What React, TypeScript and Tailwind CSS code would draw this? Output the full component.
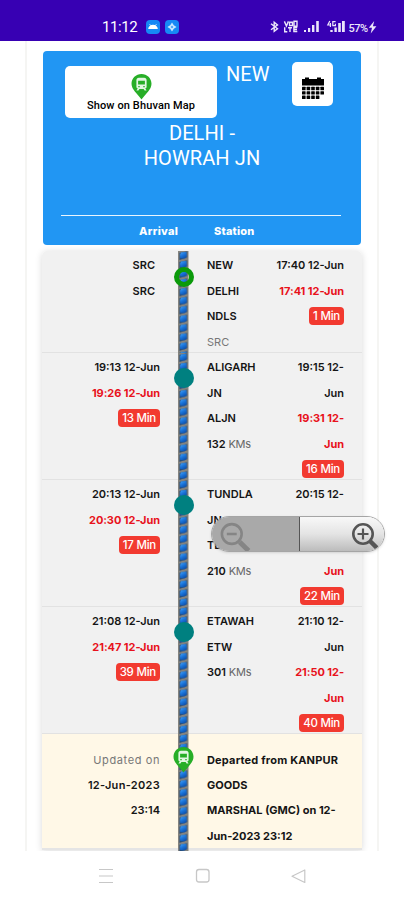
import React from "react";

interface Line {
  text: string;
  unit?: string;
  kind?: "late" | "badge" | "muted";
}

interface Stop {
  height: string;
  arrival: Line[];
  station: Line[];
  departure: Line[];
  marker: "source" | "stop";
}

const stops: Stop[] = [
  {
    height: "h-[102px]",
    marker: "source",
    arrival: [{ text: "SRC" }, { text: "SRC" }],
    station: [
      { text: "NEW" },
      { text: "DELHI" },
      { text: "NDLS" },
      { text: "SRC", kind: "muted" },
    ],
    departure: [
      { text: "17:40 12-Jun" },
      { text: "17:41 12-Jun", kind: "late" },
      { text: "1 Min", kind: "badge" },
    ],
  },
  {
    height: "h-[127px]",
    marker: "stop",
    arrival: [
      { text: "19:13 12-Jun" },
      { text: "19:26 12-Jun", kind: "late" },
      { text: "13 Min", kind: "badge" },
    ],
    station: [
      { text: "ALIGARH" },
      { text: "JN" },
      { text: "ALJN" },
      { text: "132", unit: "KMs" },
    ],
    departure: [
      { text: "19:15 12-" },
      { text: "Jun" },
      { text: "19:31 12-", kind: "late" },
      { text: "Jun", kind: "late" },
      { text: "16 Min", kind: "badge" },
    ],
  },
  {
    height: "h-[127px]",
    marker: "stop",
    arrival: [
      { text: "20:13 12-Jun" },
      { text: "20:30 12-Jun", kind: "late" },
      { text: "17 Min", kind: "badge" },
    ],
    station: [
      { text: "TUNDLA" },
      { text: "JN" },
      { text: "TDL" },
      { text: "210", unit: "KMs" },
    ],
    departure: [
      { text: "20:15 12-" },
      { text: "Jun" },
      { text: "20:37 12-", kind: "late" },
      { text: "Jun", kind: "late" },
      { text: "22 Min", kind: "badge" },
    ],
  },
  {
    height: "h-[127px]",
    marker: "stop",
    arrival: [
      { text: "21:08 12-Jun" },
      { text: "21:47 12-Jun", kind: "late" },
      { text: "39 Min", kind: "badge" },
    ],
    station: [{ text: "ETAWAH" }, { text: "ETW" }, { text: "301", unit: "KMs" }],
    departure: [
      { text: "21:10 12-" },
      { text: "Jun" },
      { text: "21:50 12-", kind: "late" },
      { text: "Jun", kind: "late" },
      { text: "40 Min", kind: "badge" },
    ],
  },
];

const TextLine = ({ line }: { line: Line }) => {
  if (line.kind === "badge") {
    return (
      <div className="flex h-[25.4px] justify-end pt-[3px]">
        <span className="h-[18px] rounded-[4px] bg-[#f23a30] px-1 text-[11.5px] leading-[18px] font-medium tracking-[-0.25px] text-white">
          {line.text}
        </span>
      </div>
    );
  }
  const tone =
    line.kind === "late"
      ? "font-bold tracking-[-0.05px] text-[#e8121c]"
      : line.kind === "muted"
        ? "font-normal text-[#777]"
        : "font-semibold text-[#151515]";
  return (
    <div className={`h-[25.4px] whitespace-nowrap ${tone}`}>
      {line.text}
      {line.unit && (
        <span className="font-normal tracking-[-0.2px] text-[#666]">
          {" "}
          {line.unit}
        </span>
      )}
    </div>
  );
};

const Lines = ({ items }: { items: Line[] }) => (
  <>
    {items.map((line, i) => (
      <TextLine key={i} line={line} />
    ))}
  </>
);

const TrainPin = ({ className }: { className: string }) => (
  <svg viewBox="0 0 20 26" className={className}>
    <path
      d="M10 0C4.4 0 0 4.3 0 9.8 0 15.6 6 20 10 25.5 14 20 20 15.6 20 9.8 20 4.3 15.6 0 10 0Z"
      fill="#27ae27"
    />
    <path
      fillRule="evenodd"
      d="M7.4 3.8h5.2c1.6 0 2.5 1 2.5 2.4v7.2l-1.3 1.2 1.3 1.8h-2l-1-1.4H7.9l-1 1.4h-2l1.3-1.8-1.3-1.2V6.2c0-1.4.9-2.4 2.5-2.4ZM6.6 6.7v3.8h6.8V6.7Zm.2 5.2v1.3h1.4v-1.3Zm5 0v1.3h1.4v-1.3Z"
      fill="#e2f6e2"
    />
  </svg>
);

const Track = ({ id }: { id: string }) => (
  <svg className="ml-[18px] block h-full w-[10.5px]">
    <defs>
      <linearGradient id={`${id}-blue`} x1="0.2" y1="0" x2="0.8" y2="1">
        <stop offset="0" stopColor="#3f9df5" />
        <stop offset="0.45" stopColor="#1a74da" />
        <stop offset="1" stopColor="#0a4aa6" />
      </linearGradient>
      <pattern
        id={id}
        width="10.5"
        height="9.07"
        patternUnits="userSpaceOnUse"
      >
        <rect width="10.5" height="9.07" fill="#85847f" />
        <path d="M1.4 1.8 9.1 0.2v6.4L1.4 9Z" fill="#294c74" />
        <path
          d="M3 1.4 8.2 0.9 8.9 5.6 6.6 7.6 2.2 7.2 2 3.4Z"
          fill={`url(#${id}-blue)`}
        />
      </pattern>
    </defs>
    <rect width="10.5" height="100%" fill={`url(#${id})`} />
  </svg>
);

const StatusBar = () => (
  <div className="flex h-[41px] bg-[#3700b3] pt-[14px] font-['Roboto'] text-white">
    <span className="ml-[102px] w-[44px] text-[15px] leading-[26px] tracking-[-0.4px]">
      11:12
    </span>
    <span className="mt-[6px] flex h-[14px] w-[14px] items-center justify-center rounded bg-[#1688f5]">
      <svg viewBox="0 0 14 14" className="h-3.5 w-3.5">
        <path d="M2.2 9a4.8 4.3 0 0 1 9.6 0Z" fill="white" />
        <path d="m3.5 4 1.3 1.8M10.5 4 9.2 5.8" stroke="white" strokeWidth="0.7" />
      </svg>
    </span>
    <span className="mt-[6px] ml-[5px] h-[14px] w-[14px] rounded bg-[#1688f5]">
      <svg viewBox="0 0 14 14" className="h-3.5 w-3.5">
        <path
          d="m7 2.4 1.8 2.8L11.6 7 8.8 8.8 7 11.6 5.2 8.8 2.4 7l2.8-1.8Z"
          fill="#c8e6ff"
        />
        <path d="M7 5.9v2.2M5.9 7h2.2" stroke="#1688f5" strokeWidth="0.8" />
      </svg>
    </span>
    <svg viewBox="0 0 108 16" className="mt-[5px] ml-[90px] h-4 w-[108px]">
      <path
        d="M2 4.8 8.5 9.8 5.2 12.4V3.2l3.3 2.7L2 10.8"
        fill="none"
        stroke="#ece6fa"
        strokeWidth="1.4"
      />
      <g fill="#ece6fa">
        <path d="M35 11h2v2h-2zM39 9h2.2v4H39zM43 6h2.4v7H43zM47.2 2h2.6v11h-2.6z" />
        <path d="M61.3 11h2.4v2h-2.4zM65.4 8.5h2.4V13h-2.4zM69.2 4h2.6v9h-2.6zM73 2h2.8v11H73z" />
        <path d="m105.2 2-5.4 6.7h3.2l-1.3 5.8 5.7-7.2h-3.5Z" />
        <path
          d="m15.4 2.4 2 4.6 2-4.6M20.6 3.2h2.8v3.4h-2.8ZM25 2.3h3v4.8h-3ZM15.7 8.3v4.4h2.6M19 8.7h4M21 8.7v4.3M28.3 8.5h-3.4v4h3.4M25 10.5h3"
          fill="none"
          stroke="#ece6fa"
          strokeWidth="1.4"
        />
        <path
          d="M60.8 2 58.8 6h3.4M61.4 4v4M66.6 2.6h-2.8v4h2.6V4.8"
          fill="none"
          stroke="#ece6fa"
          strokeWidth="1.2"
        />
        <text x="79.5" y="12.5" fontSize="11" fontWeight="500" textLength="19.5">
          57%
        </text>
      </g>
    </svg>
  </div>
);

const RouteHeader = () => (
  <div className="mx-px flex h-[194px] flex-col rounded-[4px] bg-[#2196f3] text-white">
    <div className="flex h-[68px] font-['Roboto']">
      <button
        type="button"
        className="mt-[15px] ml-[22px] flex h-[52px] w-[152px] flex-col items-center rounded-[5px] bg-white pt-2 text-black"
      >
        <TrainPin className="h-[26px] w-[21px]" />
        <span className="-mt-[2px] text-[11px] leading-[15px] font-medium tracking-[0.12px]">
          Show on Bhuvan Map
        </span>
      </button>
      <span className="mt-[8px] ml-[9px] w-[66px] text-[20px] leading-[30px]">
        NEW
      </span>
      <button
        type="button"
        className="mt-[11px] flex h-[44px] w-[41px] items-center justify-center rounded-[5px] bg-white pt-2"
      >
        <svg viewBox="0 0 24 24" className="h-6 w-6" fill="black">
          <path d="M1 3h3V1.4h4V3h8V1.4h4V3h3v6.5H1Z" />
          {[10.8, 15.2, 19.6].map((y) =>
            [1, 5.6, 10.2, 14.8, 19.4].map((x) =>
              y > 19 && x > 19 ? null : (
                <rect key={`${x}-${y}`} x={x} y={y} width="3.6" height="3.4" rx="0.5" />
              ),
            ),
          )}
        </svg>
      </button>
    </div>
    <div className="mt-[2px] h-[94px] text-center font-['Roboto'] text-[20px] leading-[24.5px] tracking-[0.1px]">
      DELHI -
      <br />
      HOWRAH JN
    </div>
    <div className="mr-[20px] ml-[18px] border-t border-white/90" />
    <div className="flex pt-[3px] text-[11px] leading-6 font-extrabold">
      <span className="ml-[96px] w-[75px] tracking-[0.3px]">Arrival</span>
      <span className="tracking-[0.2px]">Station</span>
    </div>
  </div>
);

const StopRow = ({ stop, index }: { stop: Stop; index: number }) => (
  <div
    className={`grid grid-cols-[118px_47px_66px_71px] border-b border-[#e2e2e2] bg-[#f1f1f1] ${stop.height}`}
  >
    <div
      className={`pt-[2.4px] text-right ${stop.marker === "source" ? "pr-[5px]" : ""}`}
    >
      <Lines items={stop.arrival} />
    </div>
    <div className="relative">
      <Track id={`track-${index}`} />
      {stop.marker === "source" ? (
        <span className="absolute top-[16px] left-[13.5px] h-5 w-5 rounded-full border-[5px] border-[#0b9a0b]" />
      ) : (
        <span className="absolute top-[15px] left-[13.5px] h-5 w-5 rounded-full bg-[#008080]" />
      )}
    </div>
    <div className="pt-[2.4px]">
      <Lines items={stop.station} />
    </div>
    <div className="pt-[2.4px] text-right">
      <Lines items={stop.departure} />
    </div>
  </div>
);

const CurrentRow = () => (
  <div className="grid h-[116px] grid-cols-[118px_47px_137px] border-b-2 border-[#e5e5e5] bg-[#fff8e7] leading-[25.4px]">
    <div className="pt-[13.5px] text-right font-semibold text-[#151515]">
      <div className="h-[25.4px] font-normal tracking-[0.6px] text-[#777]">
        Updated on
      </div>
      <div className="h-[25.4px] tracking-[0.3px]">12-Jun-2023</div>
      <div className="h-[25.4px]">23:14</div>
    </div>
    <div className="relative">
      <Track id="track-current" />
      <TrainPin className="absolute top-[13px] left-[13px] h-[26px] w-[21px]" />
    </div>
    <div className="pt-[13.5px] font-bold whitespace-nowrap text-[#151515]">
      <div className="h-[25.4px] tracking-[0.18px]">Departed from KANPUR</div>
      <div className="h-[25.4px]">GOODS</div>
      <div className="h-[25.4px]">MARSHAL (GMC) on 12-</div>
      <div className="h-[25.4px]">Jun-2023 23:12</div>
    </div>
  </div>
);

const ZoomControls = () => (
  <div className="absolute top-[516px] left-[211px] flex h-9 w-[174px] overflow-hidden rounded-full border border-[#a5a5a5] shadow-sm">
    <button
      type="button"
      className="h-full w-[88px] border-r border-[#555] bg-[#a9a9a9]"
    >
      <svg viewBox="0 0 88 34" className="h-full w-full" fill="none" stroke="#858585">
        <circle cx="20" cy="17" r="10" strokeWidth="2.6" />
        <path d="M15 17h10" strokeWidth="2.4" />
        <path d="m28 25 9 9" strokeWidth="5" />
      </svg>
    </button>
    <button
      type="button"
      className="h-full flex-1 bg-gradient-to-b from-[#f8f8f8] via-[#e4e4e4] to-[#bcbcbc]"
    >
      <svg viewBox="0 0 84 34" className="h-full w-full" fill="none" stroke="#555">
        <circle cx="63" cy="17" r="9.7" strokeWidth="2.6" />
        <path d="M57.5 17h11M63 11.5v11" strokeWidth="2.2" />
        <path d="m70 24 7 7" strokeWidth="4.5" />
      </svg>
    </button>
  </div>
);

const NavBar = () => (
  <div className="flex h-[49px] items-center bg-white">
    <svg viewBox="0 0 404 49" className="h-[49px] w-[404px]" fill="none" stroke="#c7c7c7">
      <path d="M99 18.5h14M99 25h14M99 31.5h14" strokeWidth="1.1" />
      <rect x="196.5" y="18.5" width="12.5" height="12.5" rx="2.5" strokeWidth="1.3" />
      <path d="M304.8 19v12.5L292 25.2Z" strokeWidth="1.2" strokeLinejoin="round" />
    </svg>
  </div>
);

const App: React.FC = () => {
  return (
    <div className="relative h-[900px] w-[404px] overflow-hidden bg-white font-['Inter','Liberation_Sans',sans-serif] text-[11px]">
      <StatusBar />
      <div className="mx-[25px] h-[810px] overflow-hidden border-x-2 border-[#f5f5f3] px-[15px] pt-[10px]">
        <RouteHeader />
        <div className="mt-[6px] rounded-t-[5px] leading-[25.4px] shadow-[0_1px_7px_rgba(0,0,0,0.15)]">
          {stops.map((stop, i) => (
            <div key={i} className="overflow-hidden bg-[#f1f1f1] first:rounded-t-[5px]">
              <StopRow stop={stop} index={i} />
            </div>
          ))}
          <CurrentRow />
        </div>
      </div>
      <ZoomControls />
      <NavBar />
    </div>
  );
};

export default App;
